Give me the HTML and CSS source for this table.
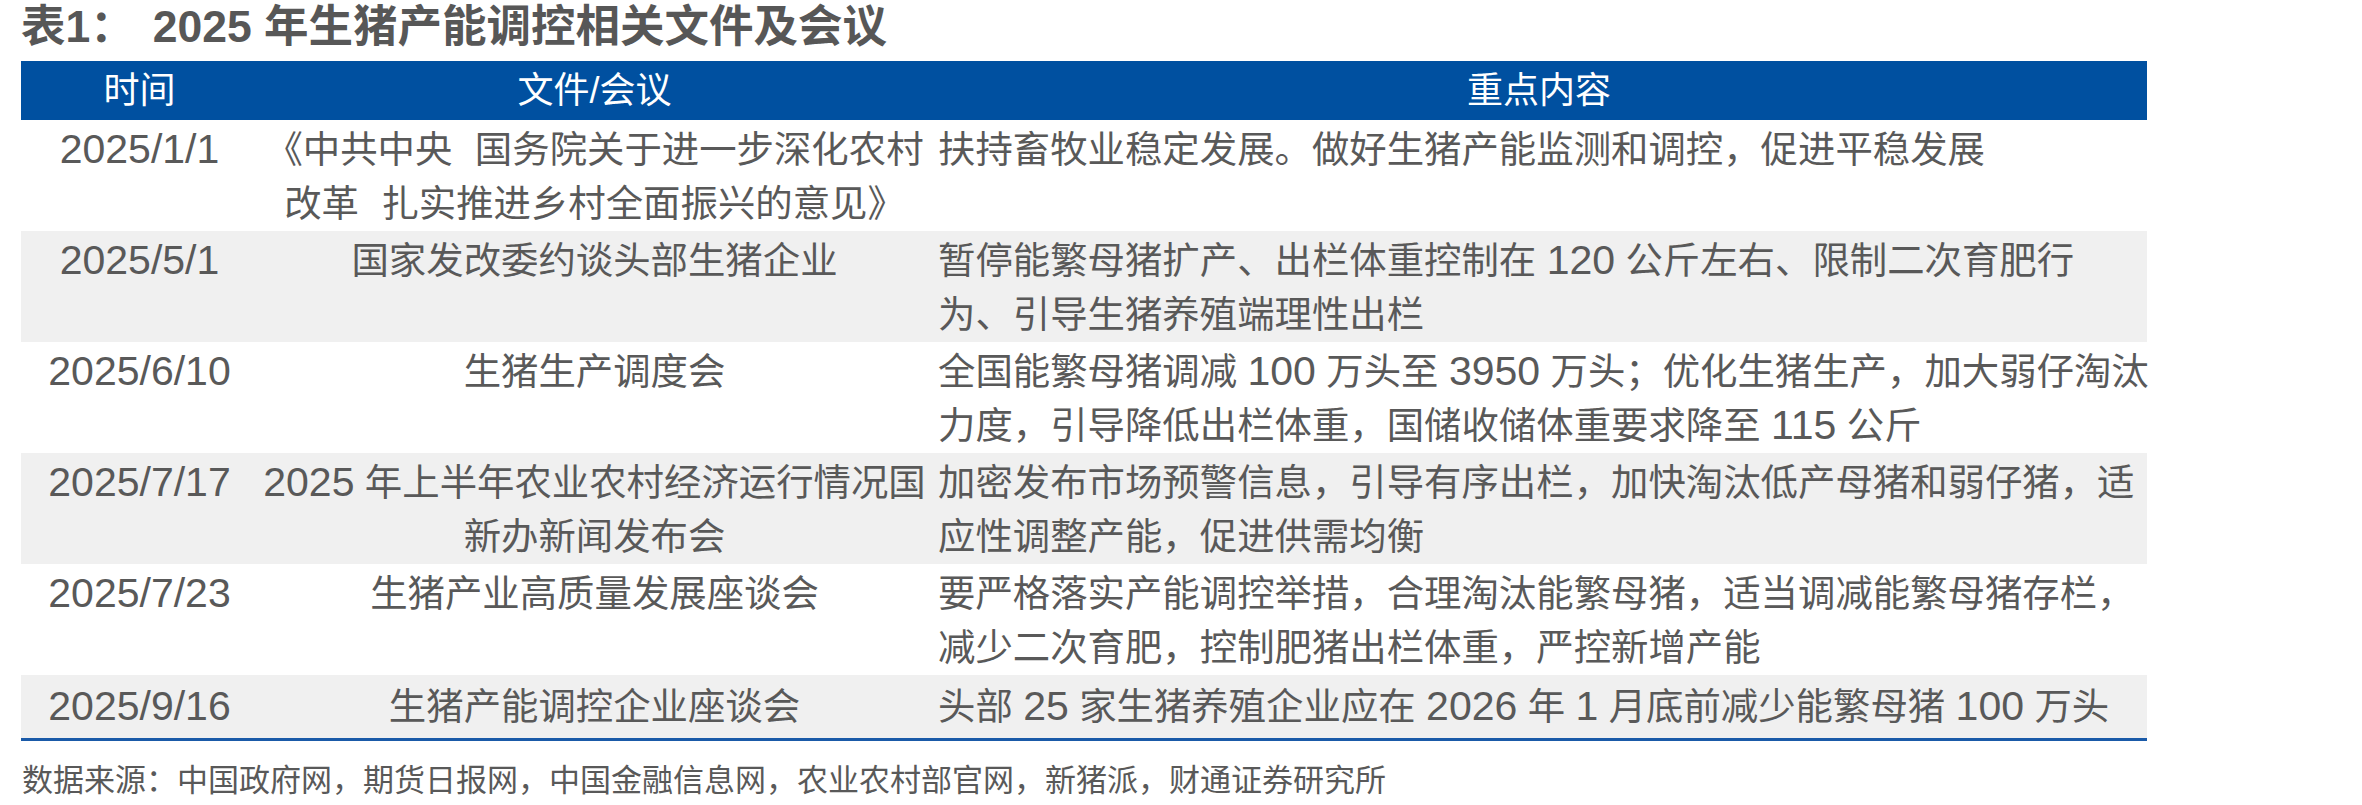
FILE: index.html
```html
<!DOCTYPE html>
<html lang="zh-CN">
<head>
<meta charset="utf-8">
<title>2025 年生猪产能调控相关文件及会议</title>
<link rel="stylesheet" href="styles.css">
</head>
<body>
<div class="page">
  <h1 class="title"><span class="title-label">表1：</span>2025 年生猪产能调控相关文件及会议</h1>
  <div class="table">
    <div class="row head">
      <div class="cell c-time">时间</div>
      <div class="cell c-doc">文件/会议</div>
      <div class="cell c-content center">重点内容</div>
    </div>
    <div class="row">
      <div class="cell c-time"><span class="num">2025/1/1</span></div>
      <div class="cell c-doc">《中共中央<span class="gap"></span>国务院关于进一步深化农村<br>改革<span class="gap"></span>扎实推进乡村全面振兴的意见》</div>
      <div class="cell c-content">扶持畜牧业稳定发展。做好生猪产能监测和调控，促进平稳发展</div>
    </div>
    <div class="row alt">
      <div class="cell c-time"><span class="num">2025/5/1</span></div>
      <div class="cell c-doc">国家发改委约谈头部生猪企业</div>
      <div class="cell c-content">暂停能繁母猪扩产、出栏体重控制在 <span class="num">120</span> 公斤左右、限制二次育肥行<br>为、引导生猪养殖端理性出栏</div>
    </div>
    <div class="row">
      <div class="cell c-time"><span class="num">2025/6/10</span></div>
      <div class="cell c-doc">生猪生产调度会</div>
      <div class="cell c-content">全国能繁母猪调减 <span class="num">100</span> 万头至 <span class="num">3950</span> 万头；优化生猪生产，加大弱仔淘汰<br>力度，引导降低出栏体重，国储收储体重要求降至 <span class="num">115</span> 公斤</div>
    </div>
    <div class="row alt">
      <div class="cell c-time"><span class="num">2025/7/17</span></div>
      <div class="cell c-doc"><span class="num">2025</span> 年上半年农业农村经济运行情况国<br>新办新闻发布会</div>
      <div class="cell c-content">加密发布市场预警信息，引导有序出栏，加快淘汰低产母猪和弱仔猪，适<br>应性调整产能，促进供需均衡</div>
    </div>
    <div class="row">
      <div class="cell c-time"><span class="num">2025/7/23</span></div>
      <div class="cell c-doc">生猪产业高质量发展座谈会</div>
      <div class="cell c-content">要严格落实产能调控举措，合理淘汰能繁母猪，适当调减能繁母猪存栏，<br>减少二次育肥，控制肥猪出栏体重，严控新增产能</div>
    </div>
    <div class="row alt last">
      <div class="cell c-time"><span class="num">2025/9/16</span></div>
      <div class="cell c-doc">生猪产能调控企业座谈会</div>
      <div class="cell c-content">头部 <span class="num">25</span> 家生猪养殖企业应在 <span class="num">2026</span> 年 <span class="num">1</span> 月底前减少能繁母猪 <span class="num">100</span> 万头</div>
    </div>
  </div>
  <p class="source">数据来源：中国政府网，期货日报网，中国金融信息网，农业农村部官网，新猪派，财通证券研究所</p>
</div>
</body>
</html>
```

FILE: styles.css
```css
html, body {
  margin: 0;
  padding: 0;
  background: #ffffff;
}

.page {
  padding: 2px 0 0 21px;
  font-family: "Liberation Sans", "Noto Sans CJK SC", sans-serif;
  color: #595959;
}

.title {
  margin: 0;
  font-size: 44.5px;
  line-height: 50px;
  font-weight: bold;
  color: #575757;
  white-space: nowrap;
}

.title-label {
  margin-right: 18px;
}

.table {
  margin-top: 9px;
  width: 2126px;
  border-bottom: 3px solid #1a5aa8;
}

.row {
  display: grid;
  grid-template-columns: 237px 673px 1fr;
  padding: 3px 0 0;
  font-size: 37.4px;
  line-height: 54px;
  white-space: nowrap;
}

.row.alt {
  background: #f0f0f0;
}

.row.last {
  padding: 5px 0 4px;
}

.row.head {
  background: #0050a0;
  color: #ffffff;
  font-size: 36px;
  line-height: 59px;
  padding: 0;
}

.cell {
  min-width: 0;
}

.c-time {
  text-align: center;
}

.c-doc {
  text-align: center;
}

.gap {
  display: inline-block;
  width: 0.6em;
}

.c-content {
  padding-left: 7px;
  text-align: left;
}

.c-content.center {
  text-align: center;
  padding-left: 0;
}

.num {
  font-size: 41px;
  line-height: 1;
}

.source {
  margin: 20px 0 0 1px;
  font-size: 31px;
  line-height: 40px;
  color: #595959;
}
```
